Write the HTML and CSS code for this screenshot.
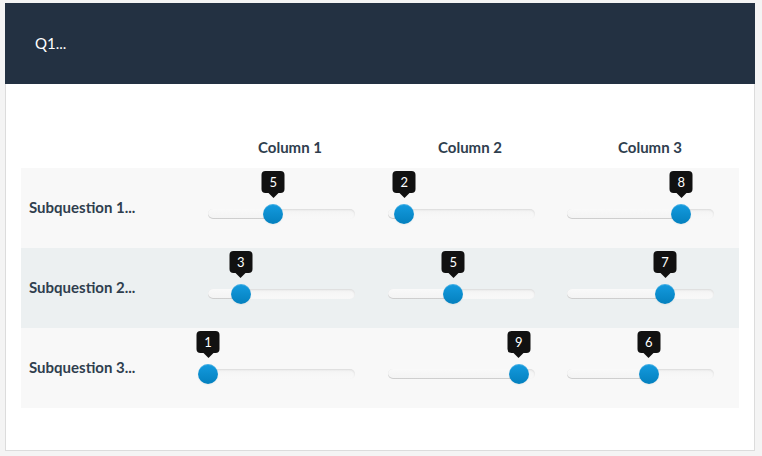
FILE: index.html
```html
<!DOCTYPE html>
<html>
<head>
<meta charset="utf-8">
<link rel="stylesheet" href="styles.css">
</head>
<body>
<div class="card">
  <div class="card-header">Q1...</div>
  <div class="card-body">
    <div class="grid">
      <div class="head-row">
        <div class="lbl-col"></div>
        <div class="col-head">Column 1</div>
        <div class="col-head">Column 2</div>
        <div class="col-head">Column 3</div>
      </div>
      <div class="row odd">
        <div class="lbl-col row-label">Subquestion 1...</div>
        <div class="cell"><div class="slider"><div class="sel" style="width:44.44%"></div><div class="handle" style="left:44.44%"><div class="tip">5</div></div></div></div>
        <div class="cell"><div class="slider"><div class="sel" style="width:11.11%"></div><div class="handle" style="left:11.11%"><div class="tip">2</div></div></div></div>
        <div class="cell c3"><div class="slider"><div class="sel" style="width:77.78%"></div><div class="handle" style="left:77.78%"><div class="tip">8</div></div></div></div>
      </div>
      <div class="row even">
        <div class="lbl-col row-label">Subquestion 2...</div>
        <div class="cell"><div class="slider"><div class="sel" style="width:22.22%"></div><div class="handle" style="left:22.22%"><div class="tip">3</div></div></div></div>
        <div class="cell"><div class="slider"><div class="sel" style="width:44.44%"></div><div class="handle" style="left:44.44%"><div class="tip">5</div></div></div></div>
        <div class="cell c3"><div class="slider"><div class="sel" style="width:66.67%"></div><div class="handle" style="left:66.67%"><div class="tip">7</div></div></div></div>
      </div>
      <div class="row odd">
        <div class="lbl-col row-label">Subquestion 3...</div>
        <div class="cell"><div class="slider"><div class="sel" style="width:0%"></div><div class="handle" style="left:0%"><div class="tip">1</div></div></div></div>
        <div class="cell"><div class="slider"><div class="sel" style="width:88.89%"></div><div class="handle" style="left:88.89%"><div class="tip">9</div></div></div></div>
        <div class="cell c3"><div class="slider"><div class="sel" style="width:55.56%"></div><div class="handle" style="left:55.56%"><div class="tip">6</div></div></div></div>
      </div>
    </div>
  </div>
</div>
</body>
</html>
```
FILE: styles.css
```css
html, body {
  margin: 0;
  padding: 0;
  background: #f4f4f4;
}
body {
  padding: 3px 7px 0 5px;
  font-family: Lato, "Open Sans", sans-serif;
}
.card {
  width: 750px;
  background: #fff;
}
.card-header {
  height: 81px;
  background: #233142;
  color: #fff;
  font-size: 15px;
  line-height: 81px;
  padding-left: 30px;
  box-sizing: border-box;
}
.card-body {
  border: 1px solid #dcdcdc;
  border-top: none;
  padding: 45px 15px 42px 15px;
}
.grid {
  width: 718px;
}
.head-row, .row {
  display: flex;
}
.head-row {
  height: 39px;
}
.lbl-col {
  width: 179px;
  flex: none;
}
.col-head {
  width: 180px;
  flex: none;
  text-align: center;
  font-weight: bold;
  font-size: 15px;
  color: #2f3e4e;
  line-height: 37px;
}
.row {
  height: 80px;
}
.odd { background: #f8f8f8; }
.even { background: #ecf0f1; }
.row-label {
  display: flex;
  align-items: center;
  padding: 0 0 3px 8px;
  box-sizing: border-box;
  font-weight: bold;
  font-size: 15px;
  color: #2f3e4e;
}
.cell {
  width: 180px;
  flex: none;
  padding: 41px 0 0 8px;
  box-sizing: border-box;
}
.cell.c3 {
  width: 179px;
  padding-left: 7px;
}
.slider {
  position: relative;
  width: 147px;
  height: 10px;
  border-radius: 5px;
  background: linear-gradient(to bottom, #f3f3f3, #f9f9f9);
  box-shadow: inset 0 1px 2px rgba(0,0,0,0.1);
}
.sel {
  height: 10px;
  border-radius: 5px;
  background: linear-gradient(to bottom, #f9f9f9, #f3f3f3);
  box-shadow: inset 0 -1px 0 rgba(0,0,0,0.15);
}
.handle {
  position: absolute;
  top: -5px;
  width: 20px;
  height: 20px;
  margin-left: -10px;
  border-radius: 50%;
  background: linear-gradient(to bottom, #149bdf, #0480be);
  box-shadow: inset 0 1px 0 rgba(255,255,255,0.2), 0 1px 2px rgba(0,0,0,0.05);
}
.tip {
  position: absolute;
  bottom: 31px;
  left: 50%;
  transform: translateX(-50%);
  width: 23px;
  height: 22px;
  border-radius: 4px;
  background: #111;
  color: #fff;
  font-size: 13px;
  line-height: 22px;
  text-align: center;
}
.tip::after {
  content: "";
  position: absolute;
  left: 50%;
  top: 100%;
  margin-left: -5px;
  border-left: 5px solid transparent;
  border-right: 5px solid transparent;
  border-top: 5px solid #111;
}
```
